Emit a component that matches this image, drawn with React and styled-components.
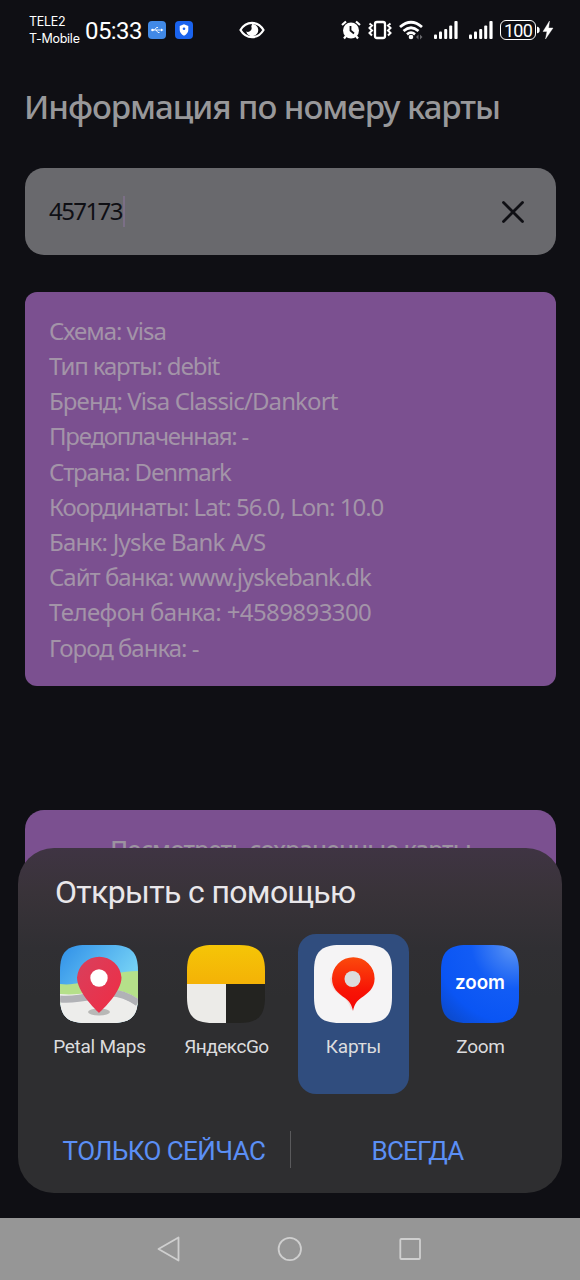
import React from "react";
import styled, { createGlobalStyle } from "styled-components";

const Global = createGlobalStyle`
  * { box-sizing: border-box; }
  body { margin: 0; background: #0f0f14; }
`;

const Screen = styled.div`
  position: relative;
  display: flex;
  flex-direction: column;
  width: 580px;
  height: 1280px;
  overflow: hidden;
  background: #0f0f14;
  font-family: "Noto Sans", sans-serif;
`;

const StatusBar = styled.header`
  display: flex;
  align-items: center;
  height: 60px;
  padding: 0 25px 0 29px;
  color: #fff;
  font-family: Inter, sans-serif;
`;

const Carriers = styled.div`
  display: flex;
  flex-direction: column;
  width: 56px;
  font-size: 12.5px;
  line-height: 17.5px;
  white-space: nowrap;
`;

const Carrier = styled.span`
  letter-spacing: ${(p) => p.$spacing}px;
`;

const Clock = styled.time`
  width: 63px;
  padding-top: 2px;
  font-family: Roboto, sans-serif;
  font-size: 24px;
  line-height: 30px;
  letter-spacing: -0.6px;
  white-space: nowrap;
`;

const Icon = styled.svg`
  display: block;
  flex: none;
  margin-left: ${(p) => p.$gap || 0}px;
`;

const StatusRight = styled.div`
  display: flex;
  align-items: center;
  margin-left: auto;
`;

const Battery = styled.div`
  display: flex;
  align-items: center;
  justify-content: center;
  width: 36px;
  height: 20px;
  margin-left: 7px;
  border: 1.5px solid #fff;
  border-radius: 6px;
  font: 400 18px/19px Roboto, sans-serif;
  letter-spacing: -0.7px;
`;

const Content = styled.main`
  display: flex;
  flex-direction: column;
  padding: 0 24px 0 25px;
`;

const Heading = styled.h1`
  margin: 23px 0 0 -1px;
  font-size: 33px;
  line-height: 48px;
  font-weight: 500;
  letter-spacing: -1.03px;
  color: #98989a;
  white-space: nowrap;
`;

const Field = styled.div`
  display: flex;
  align-items: center;
  height: 87px;
  margin-top: 37px;
  padding: 0 31px 0 24px;
  border-radius: 19px;
  background: #69696d;
`;

const FieldValue = styled.span`
  padding-bottom: 2px;
  font-size: 24px;
  line-height: 34px;
  letter-spacing: -1.6px;
  color: #0f0f14;
`;

const Caret = styled.span`
  width: 2.5px;
  height: 31px;
  margin-left: 1px;
  background: #7b6f86;
`;

const ClearIcon = styled.svg`
  margin-left: auto;
`;

const InfoCard = styled.section`
  height: 394px;
  margin-top: 37px;
  padding: 20.7px 24px;
  border-radius: 12px;
  background: #7b5090;
`;

const InfoLine = styled.p`
  margin: 0;
  font-size: 24px;
  line-height: 35.2px;
  letter-spacing: ${(p) => p.$spacing}px;
  color: #a394a8;
  white-space: nowrap;
`;

const SavedButton = styled.button`
  height: 88px;
  margin-top: 124px;
  padding: 0 0 11px;
  border: 0;
  border-radius: 19px;
  background: #7b5090;
  color: #9c93a0;
  font: 500 24px/34px "Noto Sans", sans-serif;
  letter-spacing: -0.82px;
`;

const Sheet = styled.div`
  position: absolute;
  left: 18px;
  top: 848px;
  display: flex;
  flex-direction: column;
  width: 544px;
  height: 345px;
  border-radius: 36px;
  background: linear-gradient(#3f3443 0, #393339 45px, #302f33 100px, #2e2e30 150px);
  font-family: Roboto, sans-serif;
`;

const SheetTitle = styled.h2`
  margin: 25px 0 0 37px;
  font-size: 32px;
  line-height: 38px;
  font-weight: 400;
  letter-spacing: -0.65px;
  color: #e9e7ea;
  white-space: nowrap;
`;

const AppGrid = styled.div`
  display: grid;
  grid-template-columns: repeat(4, 111px);
  column-gap: 16px;
  margin: 23px 0 0 26px;
`;

const AppOption = styled.button`
  display: flex;
  flex-direction: column;
  align-items: center;
  height: 160px;
  padding: 11px 1px 0 0;
  border: 0;
  border-radius: 18px;
  background: ${(p) => (p.$selected ? "#304d7e" : "transparent")};
`;

const AppLabel = styled.span`
  margin: 12px 0 0 1px;
  font: 400 19px/24px Roboto, sans-serif;
  letter-spacing: ${(p) => p.$spacing}px;
  color: #dcdcde;
  white-space: nowrap;
`;

const Actions = styled.div`
  display: grid;
  grid-template-columns: 254px 1px 1fr;
  align-items: center;
  height: 37px;
  margin: 37px 18px 0;
`;

const Action = styled.button`
  padding: 3px 0 0 ${(p) => p.$inset || 0}px;
  border: 0;
  background: none;
  color: #5b8ff5;
  font: 400 26px/34px Roboto, sans-serif;
  letter-spacing: ${(p) => p.$spacing}px;
  white-space: nowrap;
`;

const Divider = styled.span`
  height: 37px;
  background: #5a5a5c;
`;

const NavBar = styled.nav`
  position: absolute;
  left: 0;
  bottom: 0;
  display: flex;
  justify-content: center;
  align-items: center;
  gap: 94px;
  width: 580px;
  height: 62.5px;
  background: #969696;
`;

const LINES = [
  ["Схема: visa", -1.03],
  ["Тип карты: debit", -1.14],
  ["Бренд: Visa Classic/Dankort", -0.89],
  ["Предоплаченная: -", -1.26],
  ["Страна: Denmark", -1.2],
  ["Координаты: Lat: 56.0, Lon: 10.0", -1.01],
  ["Банк: Jyske Bank A/S", -0.76],
  ["Сайт банка: www.jyskebank.dk", -1],
  ["Телефон банка: +4589893300", -0.59],
  ["Город банка: -", -0.99],
];

const Signal = ({ gap }) => (
  <Icon $gap={gap} width="24" height="20" viewBox="0 0 24 20" fill="#fff">
    <rect x="0" y="14.5" width="3" height="4.5" rx="1" />
    <rect x="5" y="11.5" width="3" height="7.5" rx="1" />
    <rect x="10.2" y="9" width="3" height="10" rx="1" />
    <rect x="15.2" y="5.5" width="3" height="13.5" rx="1" />
    <rect x="20.4" y="1" width="3.2" height="18" rx="1" />
  </Icon>
);

const SQUIRCLE = "M0 26C0 7 7 0 26 0H52C71 0 78 7 78 26V52C78 71 71 78 52 78H26C7 78 0 71 0 52Z";

const Tile = ({ id, children }) => (
  <Icon width="78" height="78" viewBox="0 0 78 78">
    <defs>
      <clipPath id={id}><path d={SQUIRCLE} /></clipPath>
      <linearGradient id={id + "Sky"} x1="0" y1="0" x2="0.7" y2="0.6">
        <stop offset="0" stopColor="#2f8fe8" /><stop offset="1" stopColor="#74d0f5" />
      </linearGradient>
      <linearGradient id={id + "Pin"} x1="0" y1="0" x2="1" y2="1">
        <stop offset="0" stopColor="#d8405d" /><stop offset="1" stopColor="#f02c44" />
      </linearGradient>
      <linearGradient id={id + "Gold"} x1="0" y1="0" x2="0" y2="1">
        <stop offset="0" stopColor="#f5c507" /><stop offset="1" stopColor="#f4b206" />
      </linearGradient>
      <linearGradient id={id + "Red"} x1="0" y1="0" x2="0" y2="1">
        <stop offset="0" stopColor="#fb4a0c" /><stop offset="0.6" stopColor="#f81505" /><stop offset="1" stopColor="#f50505" />
      </linearGradient>
      <radialGradient id={id + "Blue"} cx="0.95" cy="0" r="1.25">
        <stop offset="0" stopColor="#5f98f4" /><stop offset="0.2" stopColor="#3b7cf4" /><stop offset="0.45" stopColor="#125cf5" /><stop offset="0.8" stopColor="#0a55f4" /><stop offset="1" stopColor="#0b4bd0" />
      </radialGradient>
    </defs>
    <g clipPath={`url(#${id})`}>{children}</g>
  </Icon>
);

const PetalTile = () => (
  <Tile id="petal">
    <rect width="78" height="78" fill="url(#petalSky)" />
    <path d="M0 39C24 42 42 27 78 26V60H0Z" fill="#b5e08a" />
    <path d="M0 49C22 51 36 45 50 45C62 45 71 49 78 54V78H0Z" fill="#eeeeec" />
    <path d="M0 54C22 56 38 48 50 48C62 48 71 53 78 58" fill="none" stroke="#b1b2b6" strokeWidth="7" />
    <path d="M0 58.5C22 60 38 52.5 50 52.5C62 52.5 71 57 78 63V78H0Z" fill="#ededeb" />
    <ellipse cx="39" cy="67" rx="11" ry="3.5" fill="#b8b8b6" />
    <path d="M39 68C35 64 17 47 17 32.5A22.3 22.3 0 0 1 61.5 32.5C61.5 47 43 64 39 68Z" fill="url(#petalPin)" />
    <circle cx="39" cy="33" r="8.7" fill="#fff" />
  </Tile>
);

const GoTile = () => (
  <Tile id="go">
    <rect width="78" height="39" fill="url(#goGold)" />
    <rect y="39" width="39" height="39" fill="#ecebe8" />
    <rect x="39" y="39" width="39" height="39" fill="#232320" />
  </Tile>
);

const MapsTile = () => (
  <Tile id="maps">
    <rect width="78" height="78" fill="#f5f4f5" />
    <path d="M37 65Q35 55 26 50A21 21 0 0 1 16 34L24 18L40 60Z" fill="#f3dcd9" />
    <path d="M39 66C37.5 59 35.5 56.5 31 53C24 48 18 43.5 18 33.5A21.3 21.3 0 0 1 60.6 33.5C60.6 43.5 54 48 47 53C42.5 56.5 40.5 59 39 66Z" fill="url(#mapsRed)" />
    <circle cx="38.5" cy="34" r="8" fill="#dcdcdc" />
  </Tile>
);

const ZoomWord = styled.text`
  font: 600 20px Inter, sans-serif;
`;

const ZoomTile = () => (
  <Tile id="zm">
    <rect width="78" height="78" fill="url(#zmBlue)" />
    <ZoomWord x="39" y="44.3" textAnchor="middle" fill="#fff" textLength="50" lengthAdjust="spacingAndGlyphs">zoom</ZoomWord>
  </Tile>
);

const APPS = [
  ["Petal Maps", PetalTile, -0.25],
  ["ЯндексGo", GoTile, -0.5],
  ["Карты", MapsTile, -0.2],
  ["Zoom", ZoomTile, -0.3],
];

export default function App() {
  return (
    <Screen>
      <Global />
      <StatusBar>
        <Carriers>
          <Carrier $spacing={-0.3}>TELE2</Carrier>
          <Carrier $spacing={-0.25}>T-Mobile</Carrier>
        </Carriers>
        <Clock>05:33</Clock>
        <Icon width="18" height="18" viewBox="0 0 18 18">
          <rect width="18" height="18" rx="4" fill="#4189e6" />
          <path d="M4 9H14M6.5 9L8.5 6.5H10M8 9L10 11.5H11.5" fill="none" stroke="#fff" strokeWidth="0.9" />
          <circle cx="4.5" cy="9" r="1.3" fill="#fff" />
          <path d="M13 7.5L15.5 9L13 10.5Z" fill="#fff" />
        </Icon>
        <Icon $gap={9} width="18" height="18" viewBox="0 0 18 18">
          <rect width="18" height="18" rx="4" fill="#1a63ee" />
          <path d="M9 3.3L13.3 5V9C13.3 11.5 11.5 13.5 9 14.7C6.5 13.5 4.7 11.5 4.7 9V5Z" fill="#fff" />
          <circle cx="9" cy="7.8" r="1.3" fill="#1a63ee" />
        </Icon>
        <Icon $gap={46} width="26" height="18" viewBox="0 0 26 18">
          <path d="M1.5 9C7 -0.5 19 -0.5 24.5 9C19 18.5 7 18.5 1.5 9Z" fill="none" stroke="#fff" strokeWidth="2.2" />
          <path d="M13 3A6.1 6.1 0 1 1 7.2 10.5Q9 11.5 10.8 10.3Q13.5 8.5 12.3 5.5Z" fill="#fff" />
        </Icon>
        <StatusRight>
          <Icon width="20" height="20" viewBox="0 0 20 20">
            <circle cx="10" cy="10.5" r="8" fill="#fff" />
            <path d="M1 5L5 1.5M19 5L15 1.5M5 16L3 18.5M15 16L17 18.5" stroke="#fff" strokeWidth="2.2" />
            <path d="M9.5 6V10.5L13 13.5" stroke="#0f0f14" strokeWidth="1.8" fill="none" />
          </Icon>
          <Icon $gap={7} width="24" height="20" viewBox="0 0 24 20">
            <rect x="7" y="2" width="10" height="16" rx="2" fill="none" stroke="#fff" strokeWidth="2.3" />
            <path d="M1.5 3.5L4 5.5L1.5 8L4 10.5L1.5 13L4 15.5M22.5 3.5L20 5.5L22.5 8L20 10.5L22.5 13L20 15.5" fill="none" stroke="#fff" strokeWidth="2" />
          </Icon>
          <Icon $gap={7} width="26" height="20" viewBox="0 0 26 20">
            <path d="M1 7Q12 -2.5 23 7M4.5 11Q12 4.5 19.5 11M8 14.3Q12 11 16 14.3" fill="none" stroke="#fff" strokeWidth="2.8" />
            <circle cx="12" cy="17" r="2.3" fill="#fff" />
            <path d="M19.5 14.5L17 17L19.5 19.5ZM21 14.5L23.5 17L21 19.5Z" fill="#66666a" />
          </Icon>
          <Signal gap={9} />
          <Signal gap={11} />
          <Battery>100</Battery>
          <Icon $gap={1} width="18" height="20" viewBox="0 0 18 20" fill="#fff">
            <path d="M0 7H1Q2.5 7.5 2.5 10Q2.5 12.5 1 13H0ZM12.5 1L6 11.5H10L8.5 19L16 8H11.6Z" stroke="#fff" strokeWidth="0.4" />
          </Icon>
        </StatusRight>
      </StatusBar>
      <Content>
        <Heading>Информация по номеру карты</Heading>
        <Field>
          <FieldValue>457173</FieldValue>
          <Caret />
          <ClearIcon width="24" height="24" viewBox="0 0 24 24">
            <path d="M2.5 2.5L21.5 21.5M21.5 2.5L2.5 21.5" stroke="#0f0f14" strokeWidth="2.8" strokeLinecap="round" />
          </ClearIcon>
        </Field>
        <InfoCard>
          {LINES.map(([text, spacing]) => <InfoLine key={text} $spacing={spacing}>{text}</InfoLine>)}
        </InfoCard>
        <SavedButton>Посмотреть сохраненные карты</SavedButton>
      </Content>
      <Sheet>
        <SheetTitle>Открыть с помощью</SheetTitle>
        <AppGrid>
          {APPS.map(([name, Art, spacing]) => (
            <AppOption key={name} $selected={name === "Карты"}>
              <Art />
              <AppLabel $spacing={spacing}>{name}</AppLabel>
            </AppOption>
          ))}
        </AppGrid>
        <Actions>
          <Action $spacing={-0.55} $inset={2}>ТОЛЬКО СЕЙЧАС</Action>
          <Divider />
          <Action $spacing={-0.85}>ВСЕГДА</Action>
        </Actions>
      </Sheet>
      <NavBar>
        <Icon width="26" height="26" viewBox="0 0 26 26" fill="none" stroke="#cfcfcf" strokeWidth="1.8" strokeLinejoin="round">
          <path d="M21.5 1.5V24.5L1.5 13Z" />
        </Icon>
        <Icon width="26" height="26" viewBox="0 0 26 26" fill="none" stroke="#cfcfcf" strokeWidth="1.8">
          <circle cx="12.8" cy="13" r="11.2" />
        </Icon>
        <Icon width="26" height="26" viewBox="0 0 26 26" fill="none" stroke="#cfcfcf" strokeWidth="1.8">
          <rect x="3.3" y="3" width="19.7" height="20" rx="1" />
        </Icon>
      </NavBar>
    </Screen>
  );
}
